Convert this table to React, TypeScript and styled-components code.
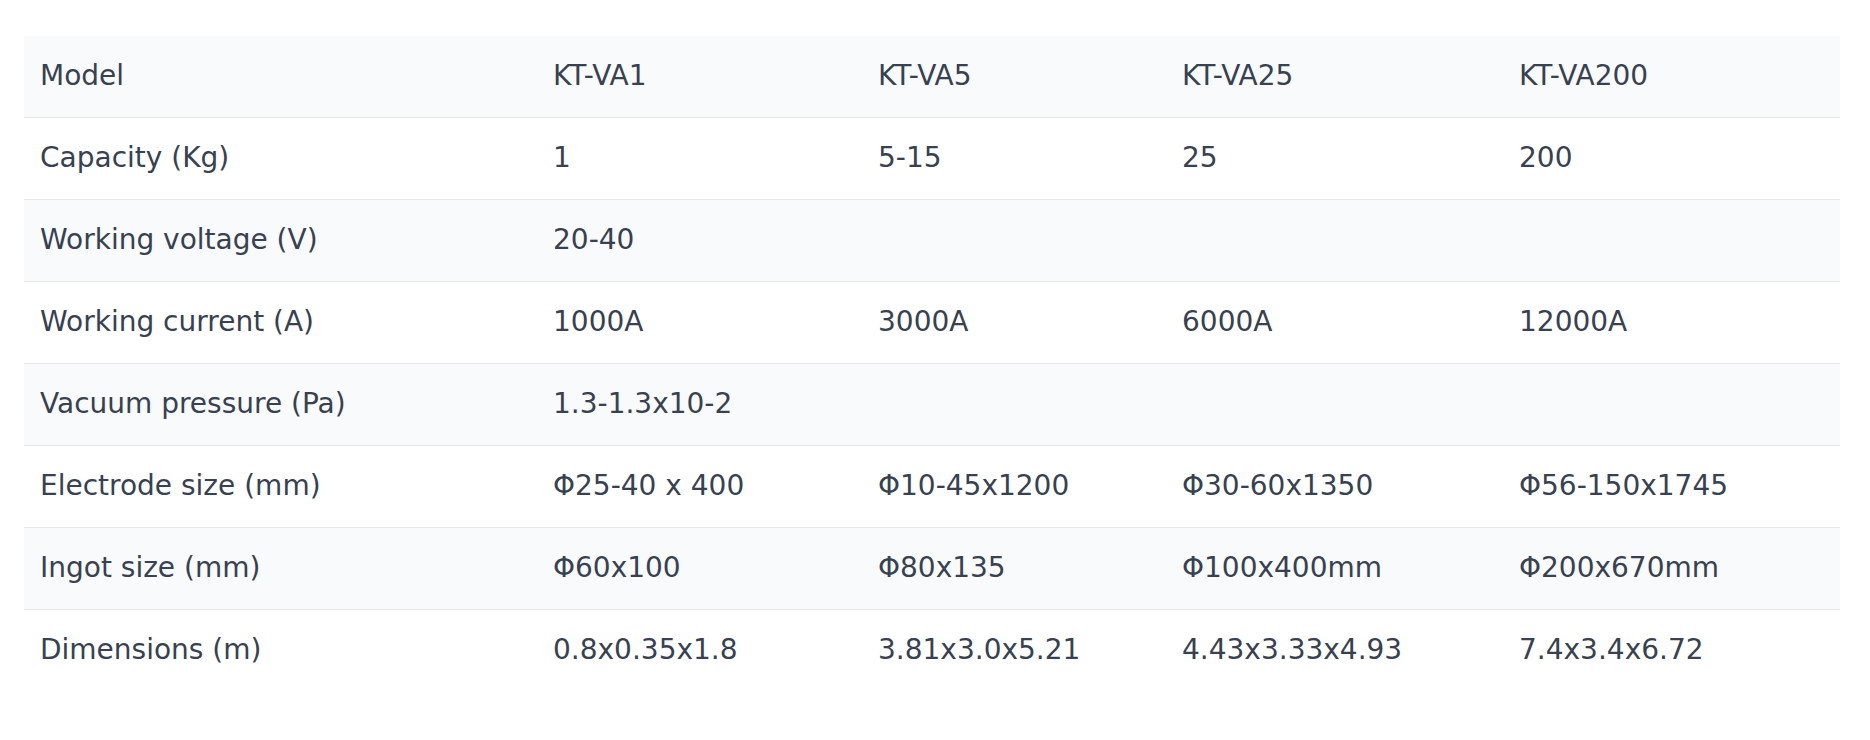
import React from "react";
import styled, { createGlobalStyle } from "styled-components";

const GlobalStyle = createGlobalStyle`
  html, body {
    margin: 0;
    padding: 0;
    background: #ffffff;
  }
  body {
    font-family: "DejaVu Sans", "Noto Sans", sans-serif;
  }
`;

const Page = styled.div`
  padding: 36px 30px 0 24px;
`;

const SpecTable = styled.table`
  width: 1816px;
  table-layout: fixed;
  border-collapse: collapse;
  border-spacing: 0;
  font-family: "DejaVu Sans", "Noto Sans", sans-serif;
  font-size: 28px;
  font-weight: 400;
  color: #374151;
`;

const Row = styled.tr<{ $shaded: boolean; $last: boolean }>`
  background: ${(p) => (p.$shaded ? "#f9fafb" : "#ffffff")};
  border-bottom: ${(p) => (p.$last ? "none" : "1px solid #e5e7eb")};
`;

const Cell = styled.td`
  height: 81px;
  padding: 0 16px;
  vertical-align: middle;
  text-align: left;
  white-space: nowrap;
  line-height: 1.3;
`;

const colWidths = [513, 325, 304, 337, 337];

const rows: string[][] = [
  ["Model", "KT-VA1", "KT-VA5", "KT-VA25", "KT-VA200"],
  ["Capacity (Kg)", "1", "5-15", "25", "200"],
  ["Working voltage (V)", "20-40", "", "", ""],
  ["Working current (A)", "1000A", "3000A", "6000A", "12000A"],
  ["Vacuum pressure (Pa)", "1.3-1.3x10-2", "", "", ""],
  ["Electrode size (mm)", "Φ25-40 x 400", "Φ10-45x1200", "Φ30-60x1350", "Φ56-150x1745"],
  ["Ingot size (mm)", "Φ60x100", "Φ80x135", "Φ100x400mm", "Φ200x670mm"],
  ["Dimensions (m)", "0.8x0.35x1.8", "3.81x3.0x5.21", "4.43x3.33x4.93", "7.4x3.4x6.72"],
];

export default function App() {
  return (
    <>
      <GlobalStyle />
      <Page>
        <SpecTable>
          <colgroup>
            {colWidths.map((w, i) => (
              <col key={i} style={{ width: `${w}px` }} />
            ))}
          </colgroup>
          <tbody>
            {rows.map((r, i) => (
              <Row key={i} $shaded={i % 2 === 0} $last={i === rows.length - 1}>
                {r.map((c, j) => (
                  <Cell key={j}>{c}</Cell>
                ))}
              </Row>
            ))}
          </tbody>
        </SpecTable>
      </Page>
    </>
  );
}
